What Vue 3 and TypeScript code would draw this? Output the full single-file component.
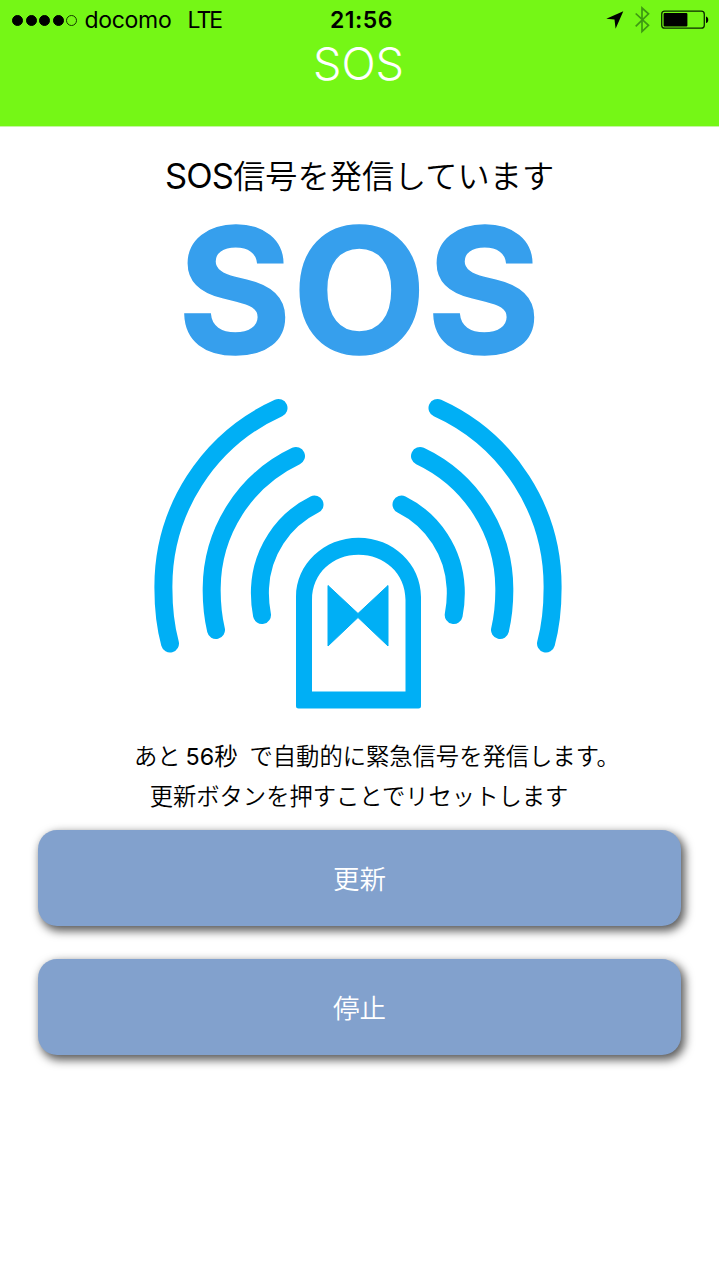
<script setup lang="ts">
import { ref } from 'vue'

const carrier = ref('docomo')
const time = ref('21:56')
const seconds = ref(56)
const signal = [true, true, true, true, false]
const arcs = [
  'M278.5 408A196 196 0 0 0 163.4 588Q163.4 619 170 643.5',
  'M296 456A147 147 0 0 0 211.7 588Q211.4 610 216 630',
  'M314.5 504.5A98 98 0 0 0 260 588Q259.4 602 262 615',
  'M437.5 408A196 196 0 0 1 552.6 588Q552.6 619 546 643.5',
  'M420 456A147 147 0 0 1 504.3 588Q504.6 610 500 630',
  'M401.5 504.5A98 98 0 0 1 455.7 588Q456.3 602 453.7 615',
]
</script>

<template>
  <div class="screen">
    <header class="top">
      <div class="status">
        <div class="left">
          <span class="dots"><i v-for="(on, i) in signal" :key="i" :class="{ on }"></i></span>
          <span class="carrier">{{ carrier }}</span>
          <span class="net">LTE</span>
        </div>
        <span class="time">{{ time }}</span>
        <svg class="indicators" width="114" height="40" viewBox="605 0 114 40">
          <path d="M623.3 11.3L606.3 18.7L614.5 19.4L615.6 28.7Z" fill="#000" />
          <path d="M635.7 13.5L648.5 25.3L642 31.6V8L648.5 13.8L635.7 26.3" fill="none" stroke="#3d9812" stroke-width="1.7" />
          <rect x="661.7" y="11.2" width="42.6" height="17" rx="3" fill="none" stroke="#0b2a00" stroke-width="1.3" />
          <rect x="663.6" y="13" width="23.8" height="13.5" rx="1" fill="#000" />
          <path d="M706 16.4C709 17 709 22.4 706 23Z" fill="#000" />
        </svg>
      </div>
      <h1 class="title">SOS</h1>
    </header>
    <main class="content">
      <p class="lead"><span class="lead-sos">SOS</span>信号を発信しています</p>
      <div class="big">SOS</div>
      <svg class="beacon" width="420" height="330" viewBox="148 390 420 330">
        <g fill="none" stroke="#00aff5">
          <path v-for="d in arcs" :key="d" :d="d" stroke-width="18" stroke-linecap="round" stroke-linejoin="round" />
        </g>
        <path fill="#00aff5" fill-rule="evenodd" d="M296 706V597C296 564 324 537.8 358.5 537.8S421 564 421 597V706Q421 708.5 418.5 708.5H298.5Q296 708.5 296 706ZM312 691.5H405.5V600C405.5 573 384 554.8 358.5 554.8S312 573 312 600Z" />
        <path d="M328 585.5L358 613.5L388 585.5V646L358 617.5L328 646Z" fill="#00aff5" stroke="#00aff5" stroke-width="1" stroke-linejoin="round" />
      </svg>
      <p class="note first"><span>あと</span><span class="count">{{ seconds }}秒</span><span>で自動的に緊急信号を発信します。</span></p>
      <p class="note second">更新ボタンを押すことでリセットします</p>
      <div class="buttons">
        <button type="button">更新</button>
        <button type="button">停止</button>
      </div>
    </main>
  </div>
</template>

<style>
body {
  margin: 0;
  background: #fff;
}
</style>

<style scoped>
.screen {
  width: 719px;
  height: 1280px;
  overflow: hidden;
  background: #fff;
  color: #000;
  font-family: Inter, "Noto Sans CJK JP", sans-serif;
}
.top {
  height: 127px;
  background: #75f716;
  border-bottom: 1px solid #c6f5a4;
  box-sizing: border-box;
}
.status {
  height: 40px;
  display: grid;
  grid-template-columns: 300px 1fr 300px;
  align-items: center;
  font-size: 23px;
}
.left {
  display: flex;
  align-items: center;
  padding-left: 12px;
  line-height: 40px;
}
.dots {
  display: flex;
  gap: 2.5px;
  margin-right: 7.5px;
}
.dots i {
  width: 11px;
  height: 11px;
  border: 1px solid #143800;
  border-radius: 50%;
  box-sizing: border-box;
}
.dots i.on {
  background: #000;
  border-color: #000;
}
.carrier {
  width: 103px;
  letter-spacing: -0.3px;
}
.net {
  letter-spacing: -1.9px;
}
.time {
  text-align: center;
  font-weight: 600;
  letter-spacing: 0.5px;
  padding-left: 4px;
}
.indicators {
  justify-self: end;
}
.title {
  margin: 0;
  text-align: center;
  color: #fff;
  font-size: 45px;
  line-height: 47px;
  font-weight: 350;
  padding-right: 2px;
}
.content {
  display: flex;
  flex-direction: column;
  align-items: center;
}
.lead {
  margin: 25px 0 0;
  font-size: 32.2px;
  line-height: 48px;
  font-weight: 350;
  white-space: nowrap;
}
.lead-sos {
  font-size: 34.5px;
  font-weight: 400;
  letter-spacing: -0.8px;
}
.big {
  margin-top: 1px;
  height: 188px;
  line-height: 175px;
  font-size: 174px;
  font-weight: 700;
  letter-spacing: 0.5px;
  -webkit-text-stroke: 1.5px #369fed;
  color: #369fed;
}
.beacon {
  margin-right: 3px;
}
.note {
  margin: 0;
  height: 40px;
  line-height: 40px;
  font-size: 23.3px;
  font-weight: 350;
  white-space: nowrap;
}
.first {
  margin-top: 17px;
  width: 476px;
  margin-left: 25px;
  display: flex;
}
.count {
  margin: 0 12px 0 5px;
  font-weight: 400;
}
.second {
  margin-right: 1px;
}
.buttons {
  width: 643px;
  margin-top: 13px;
  display: grid;
  gap: 33px;
}
button {
  height: 96px;
  border: 0;
  border-radius: 19px;
  background: #82a1cd;
  color: #fff;
  font: 350 26.5px/96px "Noto Sans CJK JP", sans-serif;
  padding: 0;
  box-shadow: 3px 4px 10px 1px rgba(0, 0, 0, 0.65);
}
</style>
